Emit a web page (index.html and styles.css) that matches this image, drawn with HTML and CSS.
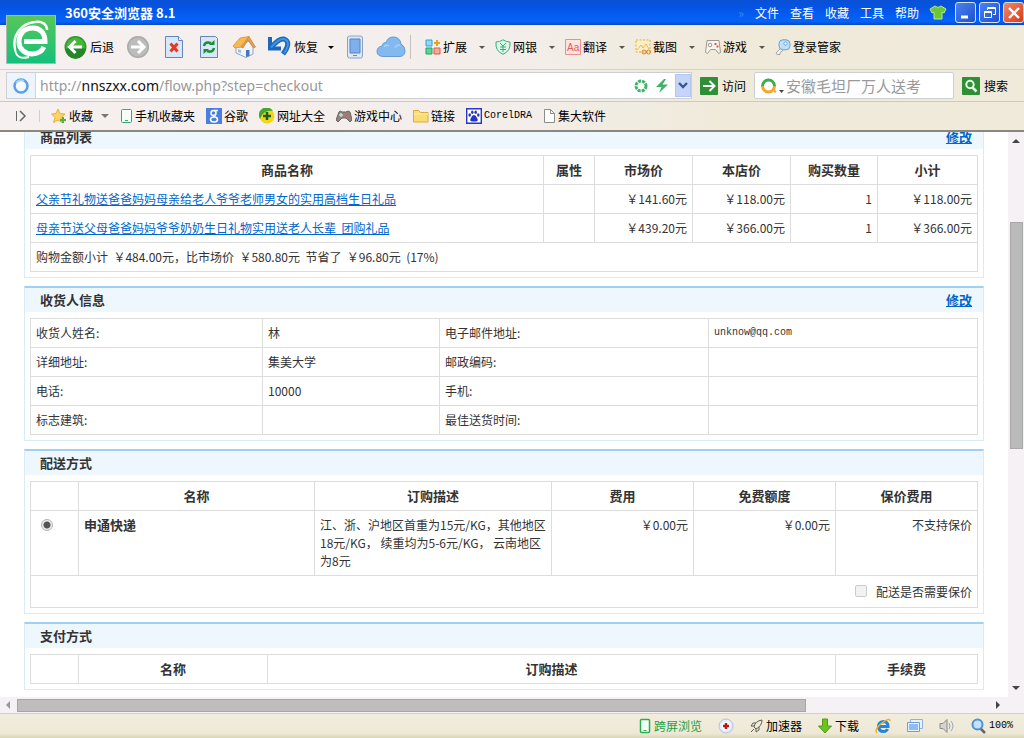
FILE: index.html
```html
<!DOCTYPE html>
<html lang="zh-CN">
<head>
<meta charset="utf-8">
<title>360安全浏览器 8.1</title>
<link rel="stylesheet" href="styles.css">
</head>
<body>
<header class="chrome">
  <div class="titlebar">
    <h1 class="app-title">360安全浏览器 8.1</h1>
    <nav class="menu">
      <span class="menu-more">»</span>
      <button>文件</button><button>查看</button><button>收藏</button><button>工具</button><button>帮助</button>
    </nav>
    <button class="skin" aria-label="皮肤"><svg width="18" height="15" viewBox="0 0 18 15"><path d="M6 1Q9 4 12 1L17 4 15 8 13 7V14H5V7L3 8 1 4Z" fill="#6cc832" stroke="#b8ec8c"/></svg></button>
    <div class="win-buttons">
      <button class="win" aria-label="最小化"><svg width="18" height="18"><path d="M4 13h7" stroke="#fff" stroke-width="3"/></svg></button>
      <button class="win" aria-label="还原"><svg width="18" height="18" fill="none" stroke="#fff"><path d="M6.500 6V3.500h8v7H12M6 4.500h8"/><path d="M3.500 7.500h7v6h-7zM3 8.500h8"/></svg></button>
      <button class="win win-close" aria-label="关闭"><svg width="18" height="18"><path d="M4 4L14 14M14 4L4 14" stroke="#fff" stroke-width="2.400"/></svg></button>
    </div>
  </div>

  <div class="toolbar">
    <div class="logo"><svg width="48" height="48" viewBox="0 0 48 48" fill="none" stroke="#fff"><path d="M17 25.500H38C38 17 33 12 26 12 17 12 12 18 12 26 12 33 18 38 25 38 31 38 35 35 37 31" stroke-width="5"/><path d="M8 33C5 20 14 7 28 6 35 5 40 8 40 14" stroke-width="2.500"/><path d="M8 33C9 42 15 43 22 41" stroke-width="2"/></svg></div>
    <div class="nav-tools">
      <button class="tool"><svg width="23" height="24" viewBox="0 0 23 24"><circle cx="11.500" cy="12" r="11" fill="#2f9a2c"/><circle cx="11.500" cy="12" r="9.500" fill="#49b53b"/><path d="M1.500 14A10 10 0 0 0 21.500 14Q12 10 1.500 14" fill="#27862a"/><path d="M18 12H6M11.500 6L5.500 12l6 6" fill="none" stroke="#fff" stroke-width="3"/></svg><span>后退</span></button>
      <button class="tool" aria-label="前进"><svg width="24" height="24" viewBox="0 0 24 24"><circle cx="12" cy="12" r="11" fill="#aaa"/><circle cx="12" cy="12" r="9.500" fill="#bcbcbc"/><path d="M5 12h12M12 6l6 6-6 6" fill="none" stroke="#fff" stroke-width="3"/></svg></button>
      <button class="tool" aria-label="停止"><svg width="24" height="24" viewBox="0 0 24 24"><path d="M3.500 1.500h13l4 4v17h-17z" fill="#d7e8fb" stroke="#6585bd"/><path d="M16.500 1.500v4h4" fill="#fff" stroke="#6585bd"/><path d="M8.500 8.500l7 8M15.500 8.500l-7 8" stroke="#e63a20" stroke-width="3"/></svg></button>
      <button class="tool" aria-label="刷新"><svg width="22" height="24" viewBox="0 0 22 24"><path d="M2.500 1.500h15l2 2v19h-17z" fill="#d7e8fb" stroke="#6585bd"/><path d="M6 11Q7 6 13 8M16 13Q15 18 9 16" fill="none" stroke="#1b8f2d" stroke-width="2.500"/><path d="M11 10h5.500V5zM11 14H5.500v5z" fill="#1b8f2d"/></svg></button>
      <button class="tool" aria-label="主页"><svg width="24" height="24" viewBox="0 0 24 24"><path d="M4 12v6l10 4.500 7-3.500v-7l-4-6z" fill="#eef4fc" stroke="#8aa5cc"/><path d="M1 11L8 3 17 1.500 10 12 3 13z" fill="#f8b850" stroke="#d8923c" stroke-width=".8"/><path d="M17 1.500L23.500 12l-2 1L16 5 11 13l-2-1z" fill="#e8a048" stroke="#c07830" stroke-width=".6"/><path d="M14 15h3.500v6L14 22z" fill="#4c74b4"/><path d="M6 14l3 1v3l-3-1z" fill="#9cc0ea"/></svg></button>
      <button class="tool"><svg width="23" height="24" viewBox="0 0 23 24"><path d="M2 2V13.500H13" fill="none" stroke="#1c68bc" stroke-width="4"/><path d="M3 12.500Q11 3 16 4 24 7 15 19" fill="none" stroke="#1c68bc" stroke-width="5"/><path d="M3 12.500Q11 3 16 4 24 7 16 18" fill="none" stroke="#3f94e4" stroke-width="2"/></svg><span>恢复</span><i class="caret caret-dark"></i></button>
      <button class="tool" aria-label="手机"><svg width="18" height="24" viewBox="0 0 18 24"><rect x="1.500" y="1" width="15" height="22" rx="2" fill="#dce8f6" stroke="#8aa4c8"/><path d="M4 4h10v14H4z" fill="#7fb0ec" stroke="#5583c4"/><path d="M7 20.500h4" stroke="#6a8ab8"/></svg></button>
      <button class="tool" aria-label="云"><svg width="30" height="24" viewBox="0 0 30 24"><path d="M7 21.500Q1 21 1 16.500 1 12 6 11 7 7 10 7.500 12 2 17 2 24 2 25 9 29 11 29 16 29 21 24 21.500z" fill="#83b9ef" stroke="#669bd4"/><path d="M8 12q2-3 5-1M24 10q-4 0-5 3" fill="none" stroke="#a9d0f6" stroke-width="1.500"/></svg></button>
    </div>
    <div class="ext-tools">
      <button class="tool ext"><svg width="16" height="16" fill="none"><path d="M1 1h6v6H1z" fill="#8fd8f4" stroke="#2fa6d6"/><path d="M1 9h6v6H1z" fill="#63d394" stroke="#1ea35a"/><path d="M9 9h6v6H9z" fill="#f9a89c" stroke="#e0594b"/><path d="M12 1v6M9 4h6" stroke="#e8a21c" stroke-width="2"/></svg><span>扩展</span><i class="caret"></i></button>
      <button class="tool ext"><svg width="16" height="16" fill="none" stroke="#35b277"><path d="M8 .8Q11 3 15 3 16 12 8 15.300 0 12 1 3 5 3 8 .8z" fill="#dff5ea"/><path d="M5 4l3 3 3-3M8 7v6M5 8h6M5 10.500h6"/></svg><span>网银</span><i class="caret"></i></button>
      <button class="tool ext"><svg width="16" height="16"><path d="M.5.5h15v15H.5z" fill="#fde3e1" stroke="#ec8f89"/><text x="2" y="12" class="aa">Aa</text></svg><span>翻译</span><i class="caret"></i></button>
      <button class="tool ext"><svg width="16" height="16" fill="none" stroke="#e5a93e"><path d="M1 1h14v12H1z" fill="#fdf0c8" stroke-dasharray="2 1.500"/><path d="M2 11l4-5 2 3 3-4 3 5" stroke="#f0b848"/><circle cx="9" cy="13" r="2" stroke="#d87c28"/><circle cx="13.500" cy="13" r="2" stroke="#d87c28"/></svg><span>截图</span><i class="caret"></i></button>
      <button class="tool ext"><svg width="16" height="16" fill="none" stroke="#a09890"><path d="M2 1.500h12l1.500 12-2 1-3-4h-5l-3 4-2-1z" fill="#f8f4f0"/><circle cx="5" cy="6" r="1.800"/><path d="M9.500 5h2M11.500 7.500h2" stroke="#d85848" stroke-width="2"/></svg><span>游戏</span><i class="caret"></i></button>
      <button class="tool ext"><svg width="16" height="16"><path d="M6 9l-5 5 1 1.500h3v-2l3-2" fill="#f4f4f4" stroke="#a0a4ac"/><rect x="4" y=".8" width="11" height="10" rx="4" fill="#bfe0f7" stroke="#6aa2cf"/><circle cx="10.500" cy="4.500" r="1.700" fill="#fff" stroke="#6aa2cf"/></svg><span>登录管家</span></button>
    </div>
  </div>

  <div class="addressbar">
    <div class="url-box">
      <span class="site-icon"><svg width="16" height="16"><circle cx="8" cy="8" r="6.500" fill="#f4faff" stroke="#5ba0e6" stroke-width="2.500"/><path d="M3 5a6 6 0 0 1 8-2" fill="none" stroke="#a4d2f8" stroke-width="2"/></svg></span>
      <div class="url" role="textbox" aria-label="网址" contenteditable="true" spellcheck="false">http://<b>nnszxx.com</b>/flow.php?step=checkout</div>
      <button aria-label="兼容模式"><svg width="16" height="16" fill="none" stroke="#3cb56a"><circle cx="8" cy="8" r="5" stroke-width="3" stroke-dasharray="3 1"/></svg></button>
      <button aria-label="极速模式"><svg width="14" height="16"><path d="M9 1L1 9h5.500L4 15 13 6.500H7.500L11 1z" fill="#3cb56a"/></svg></button>
      <button class="drop" aria-label="历史网址"><svg width="10" height="8"><path d="M1 1l4 4 4-4" fill="none" stroke="#3a5692" stroke-width="2.400"/></svg></button>
    </div>
    <button class="action"><svg width="18" height="18"><rect width="18" height="18" rx="1" fill="#2f8f35"/><path d="M3 9h11M9.500 4l5 5-5 5" fill="none" stroke="#fff" stroke-width="2"/></svg><span>访问</span></button>
    <div class="search-box">
      <svg width="24" height="18" fill="none" stroke-width="3"><path d="M2.500 9a6 6 0 0 1 12 0" stroke="#36b04a"/><path d="M2.500 9a6 6 0 0 0 12 0" stroke="#f5a623"/><path d="M14 14l2 1" stroke="#f5a623" stroke-width="2"/><path d="M19 13h5l-2.500 3z" fill="#444"/></svg>
      <input type="text" aria-label="搜索" placeholder="安徽毛坦厂万人送考">
    </div>
    <button class="action"><svg width="18" height="18"><rect width="18" height="18" rx="1" fill="#2f8f35"/><circle cx="8" cy="7.500" r="3.700" fill="none" stroke="#e8ffe8" stroke-width="2"/><path d="M10.500 10.500l4 4" stroke="#e8ffe8" stroke-width="2.500"/></svg><span>搜索</span></button>
  </div>

  <nav class="bookmarks">
    <button class="mark toggle" aria-label="展开"><svg width="12" height="12" fill="none" stroke="#666"><path d="M1.500 1v10"/><path d="M5 1l5 5-5 5" stroke-width="1.500"/></svg></button>
    <button class="mark"><svg width="16" height="16"><path d="M7 1l2 4.500 5 .5-4 3.500 1 5-4-2.500L2.500 14.500 4 9.500.5 6l4.500-.5z" fill="#fbd561" stroke="#eab13a"/><path d="M9 12h6M12 9v6" stroke="#5cae3c" stroke-width="2"/></svg><span>收藏</span><i class="caret caret-big"></i></button>
    <button class="mark"><svg width="13" height="16"><rect x="1.500" y="1.500" width="10" height="13" rx="1" fill="#f4fffa" stroke="#36a878"/><path d="M5 12.500h3" stroke="#36a878"/></svg><span>手机收藏夹</span></button>
    <button class="mark"><svg width="16" height="16" fill="none" stroke="#fff" stroke-width="1.500"><path d="M0 0h16v16H0z" fill="#4a7fe0" stroke="none"/><circle cx="7.500" cy="5" r="2.500"/><ellipse cx="8" cy="11.500" rx="3.500" ry="2.500"/><path d="M8 2.500h4M9 7l-1 2"/></svg><span>谷歌</span></button>
    <button class="mark"><svg width="16" height="16"><circle cx="8" cy="8" r="7.500" fill="#f5d616"/><path d="M1 11A7.500 7.500 0 0 1 14 3Q7 2 3 7z" fill="#46a52c"/><path d="M8 4v8M4 8h8" stroke="#17602a" stroke-width="2.500"/></svg><span>网址大全</span></button>
    <button class="mark"><svg width="16" height="16"><path d="M3 4q1-2 3 0h4q2-2 4 0l2 8-2 2-4-4H6l-4 4-2-2z" fill="#8c8580" stroke="#6c6560"/><path d="M3 7h4M5 5v4" stroke="#eee"/><circle cx="11" cy="6" r="1" fill="#e55"/><circle cx="13" cy="8" r="1" fill="#e55"/></svg><span>游戏中心</span></button>
    <button class="mark"><svg width="16" height="16"><path d="M.5 2.500h5l2 2h7.500v9.500H.5z" fill="#fbdc73" stroke="#dfa93b"/><path d="M1 6h14" stroke="#fff0b0"/></svg><span>链接</span></button>
    <button class="mark mono"><svg width="16" height="16"><path d="M.7.7h14.600v14.600H.7z" fill="#fff" stroke="#2a35c8" stroke-width="1.400"/><g fill="#2a35c8"><ellipse cx="3.700" cy="7" rx="1.300" ry="1.800"/><ellipse cx="6.300" cy="4.200" rx="1.300" ry="1.800"/><ellipse cx="9.700" cy="4.200" rx="1.300" ry="1.800"/><ellipse cx="12.300" cy="7" rx="1.300" ry="1.800"/><path d="M8 7q2 0 3 3 2 3-1 3.500H6Q3 13 5 10q1-3 3-3z"/></g></svg><span>CorelDRA</span></button>
    <button class="mark"><svg width="13" height="16"><path d="M1.500 1.500h6l4 4v9h-10z" fill="#fff" stroke="#8c8c8c"/><path d="M7.500 1.500v4h4" fill="none" stroke="#8c8c8c"/></svg><span>集大软件</span></button>
  </nav>
</header>

<div class="viewport">
  <main class="page">
    <section class="box">
      <h2>商品列表 <a href="#goods">修改</a></h2>
      <table id="goods">
        <colgroup><col><col class="w51"><col class="w98"><col class="w98"><col class="w87"><col class="w100"></colgroup>
        <thead><tr><th>商品名称</th><th>属性</th><th>市场价</th><th>本店价</th><th>购买数量</th><th>小计</th></tr></thead>
        <tbody>
          <tr><td><a href="#g1">父亲节礼物送爸爸妈妈母亲给老人爷爷老师男女的实用高档生日礼品</a></td><td></td><td class="num">￥141.60元</td><td class="num">￥118.00元</td><td class="num">1</td><td class="num">￥118.00元</td></tr>
          <tr><td><a href="#g2">母亲节送父母爸爸妈妈爷爷奶奶生日礼物实用送老人长辈&nbsp; 团购礼品</a></td><td></td><td class="num">￥439.20元</td><td class="num">￥366.00元</td><td class="num">1</td><td class="num">￥366.00元</td></tr>
          <tr><td colspan="6">购物金额小计&nbsp; ￥484.00元，比市场价&nbsp; ￥580.80元&nbsp; 节省了&nbsp; ￥96.80元&nbsp; (17%)</td></tr>
        </tbody>
      </table>
    </section>

    <section class="box">
      <h2>收货人信息 <a href="#consignee">修改</a></h2>
      <table id="consignee">
        <colgroup><col><col class="w177"><col class="w269"><col class="w269"></colgroup>
        <tbody>
          <tr><td>收货人姓名:</td><td>林</td><td>电子邮件地址:</td><td class="mono">unknow@qq.com</td></tr>
          <tr><td>详细地址:</td><td>集美大学</td><td>邮政编码:</td><td></td></tr>
          <tr><td>电话:</td><td>10000</td><td>手机:</td><td></td></tr>
          <tr><td>标志建筑:</td><td></td><td>最佳送货时间:</td><td></td></tr>
        </tbody>
      </table>
    </section>

    <section class="box">
      <h2>配送方式</h2>
      <table>
        <colgroup><col class="w48"><col><col class="w237"><col class="w142"><col class="w142"><col class="w142"></colgroup>
        <thead><tr><th></th><th>名称</th><th>订购描述</th><th>费用</th><th>免费额度</th><th>保价费用</th></tr></thead>
        <tbody>
          <tr><td class="pick"><input type="radio" name="shipping" id="sto" checked></td><td><label for="sto"><strong>申通快递</strong></label></td><td>江、浙、沪地区首重为15元/KG，其他地区18元/KG， 续重均为5-6元/KG， 云南地区为8元</td><td class="num">￥0.00元</td><td class="num">￥0.00元</td><td class="num">不支持保价</td></tr>
          <tr><td colspan="6" class="num insure"><label><input type="checkbox" disabled>配送是否需要保价</label></td></tr>
        </tbody>
      </table>
    </section>

    <section class="box">
      <h2>支付方式</h2>
      <table>
        <colgroup><col class="w48"><col class="w189"><col><col class="w142"></colgroup>
        <thead><tr><th></th><th>名称</th><th>订购描述</th><th>手续费</th></tr></thead>
      </table>
    </section>
  </main>
  <div class="vscroll">
    <i class="arrow up"></i><div class="gap-top"></div><div class="vthumb"></div><div class="gap-bottom"></div><i class="arrow down"></i>
  </div>
</div>
<div class="hscroll">
  <i class="arrow left"></i><div class="hthumb"></div><div class="gap-right"></div><i class="arrow right"></i>
</div>

<footer class="status">
  <button class="mark green"><svg width="12" height="16"><rect x="1.500" y="1.500" width="9" height="13" rx="1" fill="#f4fff4" stroke="#2cab55" stroke-width="1.500"/><path d="M4.500 12.500h3" stroke="#2cab55"/></svg><span>跨屏浏览</span></button>
  <button class="mark" aria-label="浏览器医生"><svg width="16" height="16"><circle cx="8" cy="8" r="7" fill="#e4ebf8" stroke="#b4c2dc"/><circle cx="8" cy="8" r="4.500" fill="#fff"/><path d="M8 5v6M5 8h6" stroke="#b81818" stroke-width="2.400"/></svg></button>
  <button class="mark"><svg width="13" height="16" fill="none" stroke="#605c50"><path d="M4 9q1-6 8-7 0 6-6 9zM4 8H1l2-3h3M6 11v3l3-2V9M4 11l-3 3"/></svg><span>加速器</span></button>
  <button class="mark"><svg width="14" height="16"><path d="M4.500 1h5v7h4L7 15 .5 8h4z" fill="#6cc41e" stroke="#4c9c14"/></svg><span>下载</span></button>
  <button class="mark" aria-label="IE"><svg width="16" height="16" fill="none"><path d="M3 8.500h10Q13 3.500 8.500 3.500 3.500 4 3.500 8.500q.5 5 5 5 3 0 4-2.500" stroke="#2486d8" stroke-width="3"/><path d="M2 15q-3-4 5-10t8-2" stroke="#f0b030" stroke-width="1.500"/></svg></button>
  <button class="mark" aria-label="窗口"><svg width="16" height="16"><path d="M3.500 1.500h12v9h-12z" fill="#e8f2fd" stroke="#8eb2dc"/><path d="M.5 4.500h12v9H.5z" fill="#e8f2fd" stroke="#6f9fd6"/><path d="M2 6h9v6H2z" fill="#8fbcf2"/></svg></button>
  <button class="mark" aria-label="静音"><svg width="16" height="16" fill="none" stroke="#8c8c88"><path d="M1 5.500h3l4-4v13l-4-4H1z" fill="#d4d4d0"/><path d="M10 5q2 3 0 6M12 3q4 5 0 10" stroke="#8ca8c4"/></svg></button>
  <button class="mark mono"><svg width="15" height="16"><path d="M9 10l5 5" stroke="#666" stroke-width="2.500"/><circle cx="6.500" cy="6.500" r="5" fill="#c4e2fb" stroke="#4d92d8" stroke-width="2"/></svg><span>100%</span></button>
</footer>
</body>
</html>
```
FILE: styles.css
```css
* { box-sizing: border-box; }
body {
  margin: 0;
  height: 100vh;
  display: flex;
  flex-direction: column;
  overflow: hidden;
  background: #fff;
  color: #333;
  font: 12px/18px "Noto Sans CJK SC", sans-serif;
}
button {
  border: 0;
  padding: 0;
  background: none;
  color: inherit;
  font: inherit;
  white-space: nowrap;
}
svg { display: block; flex: none; }
.mono { font-family: "Liberation Mono", monospace; font-size: 10px; }

/* window frame */
.chrome {
  flex: none;
  color: #000;
  background: linear-gradient(90deg, #f6f1f0, #f3eeea 50%, #efead9 72%);
  border-bottom: 2px solid #8b877a;
}
.titlebar {
  height: 25px;
  display: flex;
  align-items: center;
  padding-left: 65px;
  color: #fff;
  background: linear-gradient(#0a50d4, #0454e4 30%, #0463fa 85%, #0348c8);
}
.app-title { margin: 0 auto 0 0; font-size: 13px; line-height: 18px; }
.menu { display: flex; gap: 11px; }
.menu-more { color: #4c82de; }
.skin { margin: 0 8px 0 10px; }
.win-buttons { display: flex; gap: 3px; }
.win {
  width: 21px;
  height: 21px;
  display: grid;
  place-items: center;
  border: 1px solid #d4e2fa;
  border-radius: 3px;
  background: linear-gradient(135deg, #4b83ee, #1c4fd0);
}
.win-close { background: linear-gradient(135deg, #f08a6c, #d83a18); }

.toolbar {
  position: relative;
  height: 45px;
  display: flex;
  align-items: center;
  padding-left: 64px;
  border-bottom: 1px solid #d8d2c6;
}
.logo {
  position: absolute;
  left: 6px;
  top: -10px;
  width: 50px;
  height: 49px;
  border: 1px solid #a9bdb0;
  background: linear-gradient(#58c65a, #14c07c);
}
.nav-tools {
  display: flex;
  align-items: center;
  gap: 12px;
  padding-right: 4px;
  border-right: 1px solid #c8c0b8;
}
.tool { display: flex; align-items: center; gap: 3px; }
.ext-tools { display: flex; gap: 10px; padding-left: 14px; }
.ext { min-width: 60px; gap: 2px; }
.caret {
  margin-left: auto;
  border: 3px solid transparent;
  border-top-color: #555;
  border-bottom: 0;
}
.caret-dark { margin-left: 7px; border-top-color: #000; }
.caret-big { margin-left: 6px; border-width: 4px; border-bottom: 0; border-top-color: #777; }
.aa { font: 10px "Liberation Sans", sans-serif; fill: #e0605a; }

.addressbar {
  height: 32px;
  display: flex;
  align-items: center;
  gap: 8px;
  padding: 0 16px 0 6px;
  border-bottom: 1px solid #d0cabe;
}
.url-box {
  flex: 1;
  height: 27px;
  display: flex;
  align-items: center;
  gap: 6px;
  border: 1px solid #ccd0d2;
  background: #fff;
}
.site-icon {
  width: 29px;
  height: 25px;
  display: grid;
  place-items: center;
  border-right: 1px solid #ccd6e0;
  background: #edf4fb;
}
.url {
  flex: 1;
  margin-left: -2px;
  outline: 0;
  color: #999;
  font: 14px/20px "Noto Sans", sans-serif;
  white-space: nowrap;
}
.url b { color: #111; font-weight: 400; }
.drop {
  width: 16px;
  height: 23px;
  display: grid;
  place-items: center;
  border: 1px solid #b4c6f2;
  background: #c5d5fa;
}
.action { display: flex; align-items: center; gap: 4px; }
.search-box {
  width: 200px;
  height: 27px;
  display: flex;
  align-items: center;
  padding-left: 5px;
  border: 1px solid #ccd0d2;
  border-radius: 2px;
  background: #fff;
}
.search-box input {
  flex: 1;
  min-width: 0;
  border: 0;
  padding: 0 2px;
  outline: 0;
  background: none;
  font: 15px/20px "Noto Sans CJK SC", sans-serif;
}
.search-box input::placeholder { color: #999; opacity: 1; }

.bookmarks { height: 28px; display: flex; align-items: center; gap: 11px; padding-left: 15px; }
.mark { display: flex; align-items: center; gap: 3px; }
.bookmarks .mark { gap: 2px; }
.toggle { padding-right: 12px; border-right: 1px solid #d4cfc6; }

/* page */
.viewport { flex: 1; min-height: 0; display: flex; overflow: hidden; }
.page { flex: 1; min-width: 0; max-width: 960px; margin: -9px auto 0; }
.box {
  margin-bottom: 8px;
  padding: 0 5px 5px;
  border: 1px solid #d8ebf6;
  border-top: 2px solid #a0d0f4;
}
.box h2 {
  display: flex;
  justify-content: space-between;
  margin: 0 -5px 6px;
  padding: 0 11px 0 15px;
  background: #eef7fe;
  font-size: 13px;
  line-height: 24px;
}
a { color: #06c; text-decoration: underline; }
table { width: 100%; border-collapse: collapse; table-layout: fixed; }
th, td {
  height: 29px;
  padding: 5px;
  border: 1px solid #ddd;
  text-align: left;
  vertical-align: top;
}
th { text-align: center; font-size: 13px; }
strong { font-size: 13px; }
.num { text-align: right; }
.w48 { width: 48px; }
.w51 { width: 51px; }
.w87 { width: 87px; }
.w98 { width: 98px; }
.w100 { width: 100px; }
.w142 { width: 142px; }
.w177 { width: 177px; }
.w189 { width: 189px; }
.w237 { width: 237px; }
.w269 { width: 269px; }
input[type="radio"], input[type="checkbox"] {
  appearance: none;
  width: 12px;
  height: 12px;
  margin: 0;
  border: 1px solid #b4b4b4;
  border-radius: 2px;
  background: #f2f2f2;
}
input[type="radio"] {
  border-radius: 50%;
  background: radial-gradient(circle, #555 3px, #eee 4px);
}
input[type="checkbox"] { border-color: #ccc; margin-right: 9px; }
.pick { padding-left: 10px; }
.pick input { display: block; margin-top: 3px; }
.insure { padding: 7px 5px 6px; }

/* scrollbars */
.vscroll { flex: none; width: 16px; display: flex; flex-direction: column; align-items: center; padding: 7px 0; background: #f6f1f5; }
.gap-top { flex: 79; }
.vthumb { flex: 225; width: 13px; border: 1px solid #a8a8a8; background: #bababa; }
.gap-bottom { flex: 237; }
.hscroll { flex: none; height: 16px; display: flex; align-items: center; padding: 0 24px 0 6px; background: #f6f1f5; }
.hthumb { flex: 788; height: 13px; margin-left: 7px; border: 1px solid #a8a4a4; background: #bebcbc; }
.gap-right { flex: 190; }
.arrow { border: 4px solid transparent; }
.up { border-top: 0; border-bottom-color: #444; }
.down { border-bottom: 0; border-top-color: #444; }
.left { border-left: 0; border-right-color: #999; }
.right { border-right: 0; border-left-color: #444; }

.status {
  flex: none;
  height: 25px;
  display: flex;
  align-items: center;
  justify-content: flex-end;
  gap: 16px;
  padding-right: 11px;
  border-top: 1px solid #d4cfc8;
  background: linear-gradient(#f1ecdc, #eee9d7 80%, #d9d5b8);
  color: #000;
}
.green { color: #18a045; }
```
